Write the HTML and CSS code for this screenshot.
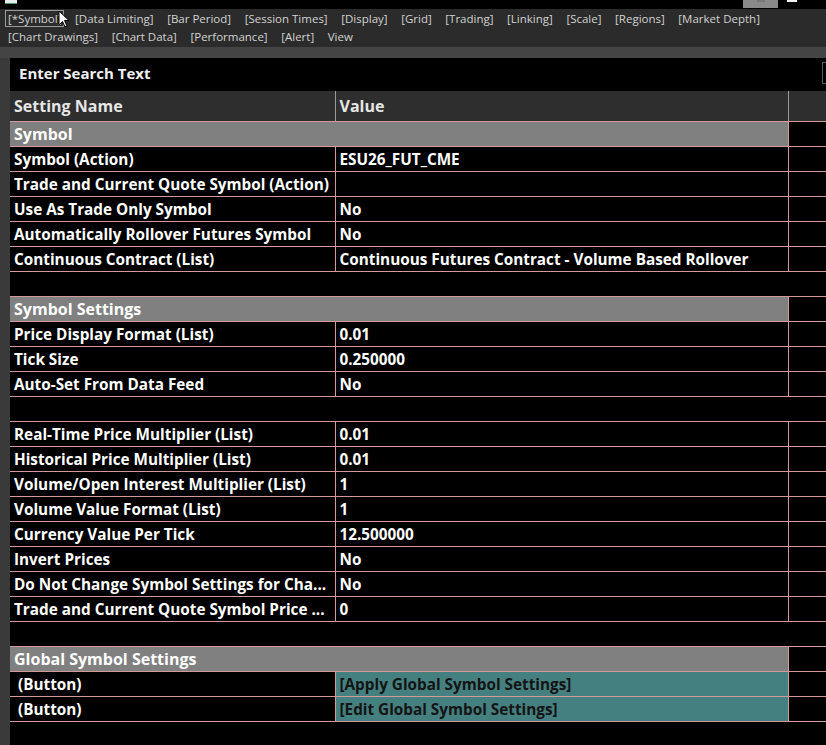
FILE: index.html
```html
<!DOCTYPE html>
<html lang="en">

<head>
  <meta charset="UTF-8" />
  <title>Chart Settings</title>
  <link rel="stylesheet" href="styles.css">
</head>

<body>

  <!-- strip of the window frame, cut off at the top -->
  <div class="frame-top">
    <span class="app-icon"></span>
    <span class="frame-btn"><span></span></span>
    <span class="frame-close"></span>
  </div>

  <div class="tab-bar">
    <div class="tab-row">
      <span class="tab active">[*Symbol]</span>
      <span class="tab">[Data Limiting]</span>
      <span class="tab">[Bar Period]</span>
      <span class="tab">[Session Times]</span>
      <span class="tab">[Display]</span>
      <span class="tab">[Grid]</span>
      <span class="tab">[Trading]</span>
      <span class="tab">[Linking]</span>
      <span class="tab">[Scale]</span>
      <span class="tab">[Regions]</span>
      <span class="tab">[Market Depth]</span>
    </div>
    <div class="tab-row">
      <span class="tab">[Chart Drawings]</span>
      <span class="tab">[Chart Data]</span>
      <span class="tab">[Performance]</span>
      <span class="tab">[Alert]</span>
      <span class="tab">View</span>
    </div>

    <svg class="cursor" width="12" height="18" viewBox="0 0 12 18">
      <path d="M1 1 L1 15 L4.5 11.5 L7 17 L9 16 L6.5 10.5 L11 10.5 Z" fill="#fff" stroke="#000" stroke-width="1" />
    </svg>
  </div>

  <div class="split-band"></div>

  <div class="main">
    <div class="side-strip"></div>

    <div class="panel">
      <div class="search">
        <span>Enter Search Text</span>
        <span class="search-box"></span>
      </div>

      <table class="grid">
        <colgroup>
          <col class="col-name">
          <col class="col-value">
          <col>
        </colgroup>
        <thead>
          <tr>
            <th>Setting Name</th>
            <th>Value</th>
            <th></th>
          </tr>
        </thead>
        <tbody>
          <tr class="group"><td colspan="2">Symbol</td><td class="rest"></td></tr>
          <tr><td>Symbol (Action)</td><td>ESU26_FUT_CME</td><td></td></tr>
          <tr><td>Trade and Current Quote Symbol (Action)</td><td></td><td></td></tr>
          <tr><td>Use As Trade Only Symbol</td><td>No</td><td></td></tr>
          <tr><td>Automatically Rollover Futures Symbol</td><td>No</td><td></td></tr>
          <tr><td>Continuous Contract (List)</td><td>Continuous Futures Contract - Volume Based Rollover</td><td></td></tr>
          <tr class="blank"><td colspan="3"></td></tr>

          <tr class="group"><td colspan="2">Symbol Settings</td><td class="rest"></td></tr>
          <tr><td>Price Display Format (List)</td><td>0.01</td><td></td></tr>
          <tr><td>Tick Size</td><td>0.250000</td><td></td></tr>
          <tr><td>Auto-Set From Data Feed</td><td>No</td><td></td></tr>
          <tr class="blank"><td colspan="3"></td></tr>

          <tr><td>Real-Time Price Multiplier (List)</td><td>0.01</td><td></td></tr>
          <tr><td>Historical Price Multiplier (List)</td><td>0.01</td><td></td></tr>
          <tr><td>Volume/Open Interest Multiplier (List)</td><td>1</td><td></td></tr>
          <tr><td>Volume Value Format (List)</td><td>1</td><td></td></tr>
          <tr><td>Currency Value Per Tick</td><td>12.500000</td><td></td></tr>
          <tr><td>Invert Prices</td><td>No</td><td></td></tr>
          <tr><td>Do Not Change Symbol Settings for Cha...</td><td>No</td><td></td></tr>
          <tr><td>Trade and Current Quote Symbol Price ...</td><td>0</td><td></td></tr>
          <tr class="blank"><td colspan="3"></td></tr>

          <tr class="group"><td colspan="2">Global Symbol Settings</td><td class="rest"></td></tr>
          <tr class="btn-row"><td>&nbsp;(Button)</td><td class="btn-cell">[Apply Global Symbol Settings]</td><td></td></tr>
          <tr class="btn-row"><td>&nbsp;(Button)</td><td class="btn-cell">[Edit Global Symbol Settings]</td><td></td></tr>
        </tbody>
      </table>
    </div>
  </div>

</body>

</html>
```

FILE: styles.css
```css
html,
body {
  margin: 0;
  padding: 0;
  background: #000;
  height: 745px;
  overflow: hidden;
}

body {
  font-family: 'Open Sans', 'Noto Sans', sans-serif;
  color: #fff;
}

/* window frame top */
.frame-top {
  height: 9px;
  background: #000;
  display: flex;
  align-items: flex-start;
}

.app-icon {
  width: 12px;
  height: 3px;
  margin-left: 5px;
  background: #e8ece8;
  border-bottom: 1px solid #4a9a6a;
}

.frame-btn {
  width: 35px;
  height: 8px;
  margin-left: auto;
  background: #8a8a8a;
  display: flex;
  justify-content: center;
}

.frame-btn span {
  width: 8px;
  height: 2px;
  background: #777;
}

.frame-close {
  width: 10px;
  height: 2px;
  margin: 0 29px 0 9px;
  background: #f2f2f2;
}

/* tabs */
.tab-bar {
  position: relative;
  background: #2b2b2b;
  height: 38px;
  padding-left: 5px;
}

.tab-row {
  display: flex;
  height: 18px;
  align-items: center;
}

.tab-row:last-child {
  margin-left: -1px;
}

.tab {
  font-size: 11.5px;
  color: #d2d2d2;
  border: 1px solid transparent;
  padding: 0 2px;
  margin-right: 7.6px;
  line-height: 15px;
  white-space: nowrap;
}

.tab.active {
  border-color: #9a9a9a;
}

.cursor {
  position: absolute;
  left: 58px;
  top: 1px;
}

.split-band {
  height: 11px;
  background: #444;
}

.main {
  display: flex;
}

.side-strip {
  width: 10px;
  height: 700px;
  background: #3a3a3a;
  flex: none;
}

.panel {
  flex: 1;
  background: #000;
}

.search {
  height: 33px;
  display: flex;
  align-items: center;
  justify-content: space-between;
  padding-left: 9px;
  font-size: 15px;
  font-weight: bold;
  color: #f0f0f0;
}

.search span:first-child {
  margin-top: -4px;
}

.search-box {
  width: 3px;
  height: 20px;
  border: 1px solid #5a5a5a;
  border-right: none;
  margin-top: -4px;
}

/* settings grid */
.grid {
  border-collapse: collapse;
  width: 100%;
  table-layout: fixed;
  font-size: 15.3px;
  font-weight: bold;
}

.col-name {
  width: 325px;
}

.col-value {
  width: 453px;
}

.grid th {
  height: 30px;
  background: #2e2e2e;
  color: #e6e6e6;
  text-align: left;
  padding: 0 0 0 4px;
  font-size: 16px;
  border-bottom: 1px solid #d49a9a;
  border-right: 1px solid #9a9a9a;
}

.grid th:last-child {
  border-right: none;
}

.grid td {
  height: 24px;
  padding: 0;
  border-bottom: 1px solid #d49a9a;
  border-right: 1px solid #d49a9a;
  white-space: nowrap;
  overflow: hidden;
  color: #fff;
  line-height: 20px;
}

.grid td:first-child {
  padding-left: 4px;
}

.grid td:nth-child(2) {
  padding-left: 4px;
}

.grid td:last-child {
  border-right: none;
}

.group td {
  background: #808080;
  color: #fff;
  font-size: 16px;
}

.group td.rest {
  background: #000;
}

.blank td {
  border-right: none;
}

.btn-cell {
  background: #458080;
  color: #141414 !important;
}
```
